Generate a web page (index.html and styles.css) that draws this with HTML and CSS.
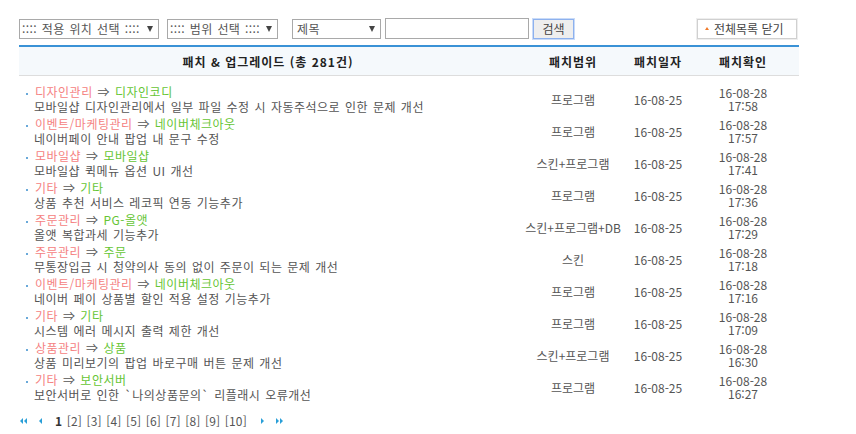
FILE: index.html
```html
<!DOCTYPE html>
<html lang="ko">
<head>
    <meta charset="UTF-8">
    <meta name="viewport" content="width=device-width, initial-scale=1.0">
    <title>패치 &amp; 업그레이드</title>
    <link rel="stylesheet" href="styles.css">
</head>
<body>
    <div class="container">
        <form class="toolbar" onsubmit="return false;">
            <label class="select-box sel-position">
                <select><option>:::: 적용 위치 선택 ::::</option></select>
            </label>
            <label class="select-box sel-range">
                <select><option>:::: 범위 선택 ::::</option></select>
            </label>
            <label class="select-box sel-field">
                <select><option>제목</option></select>
            </label>
            <input type="text" class="keyword">
            <button type="submit" class="btn-search">검색</button>
            <button type="button" class="btn-close"><span class="tri-up"></span>전체목록 닫기</button>
        </form>

        <table class="patch-list">
            <colgroup>
                <col class="col-title">
                <col class="col-range">
                <col class="col-date">
                <col class="col-check">
            </colgroup>
            <thead>
                <tr>
                    <th>패치 &amp; 업그레이드 (총 281건)</th>
                    <th>패치범위</th>
                    <th>패치일자</th>
                    <th>패치확인</th>
                </tr>
            </thead>
            <tbody id="patchRows">
                <!-- rows are filled in by the script below -->
            </tbody>
        </table>

        <div class="paging">
            <a href="#" class="pg-arrow"><svg width="8" height="6" viewBox="0 0 8 6"><polygon points="3,0 3,6 0,3"/><polygon points="7,0 7,6 4,3"/></svg></a>
            <a href="#" class="pg-arrow pg-prev"><svg width="4" height="6" viewBox="0 0 4 6"><polygon points="3,0 3,6 0,3"/></svg></a>
            <span class="pg-nums" id="pageNums"></span>
            <a href="#" class="pg-arrow pg-next"><svg width="4" height="6" viewBox="0 0 4 6"><polygon points="1,0 1,6 4,3"/></svg></a>
            <a href="#" class="pg-arrow"><svg width="8" height="6" viewBox="0 0 8 6"><polygon points="1,0 1,6 4,3"/><polygon points="5,0 5,6 8,3"/></svg></a>
        </div>
    </div>

    <script>
        // patch list data
        const patches = [
            ["디자인관리", "디자인코디", "모바일샵 디자인관리에서 일부 파일 수정 시 자동주석으로 인한 문제 개선", "프로그램", "16-08-25", "16-08-28", "17:58"],
            ["이벤트/마케팅관리", "네이버체크아웃", "네이버페이 안내 팝업 내 문구 수정", "프로그램", "16-08-25", "16-08-28", "17:57"],
            ["모바일샵", "모바일샵", "모바일샵 퀵메뉴 옵션 UI 개선", "스킨+프로그램", "16-08-25", "16-08-28", "17:41"],
            ["기타", "기타", "상품 추천 서비스 레코픽 연동 기능추가", "프로그램", "16-08-25", "16-08-28", "17:36"],
            ["주문관리", "PG-올앳", "올앳 복합과세 기능추가", "스킨+프로그램+DB", "16-08-25", "16-08-28", "17:29"],
            ["주문관리", "주문", "무통장입금 시 청약의사 동의 없이 주문이 되는 문제 개선", "스킨", "16-08-25", "16-08-28", "17:18"],
            ["이벤트/마케팅관리", "네이버체크아웃", "네이버 페이 상품별 할인 적용 설정 기능추가", "프로그램", "16-08-25", "16-08-28", "17:16"],
            ["기타", "기타", "시스템 에러 메시지 출력 제한 개선", "프로그램", "16-08-25", "16-08-28", "17:09"],
            ["상품관리", "상품", "상품 미리보기의 팝업 바로구매 버튼 문제 개선", "스킨+프로그램", "16-08-25", "16-08-28", "16:30"],
            ["기타", "보안서버", "보안서버로 인한 `나의상품문의` 리플래시 오류개선", "프로그램", "16-08-25", "16-08-28", "16:27"]
        ];

        const tbody = document.getElementById('patchRows');
        patches.forEach(function (p) {
            tbody.innerHTML += `
                <tr>
                    <td class="title">
                        <div class="cate"><span class="cate-main">${p[0]}</span> <span class="arrow">⇒</span> <span class="cate-sub">${p[1]}</span></div>
                        <div class="desc">${p[2]}</div>
                    </td>
                    <td>${p[3]}</td>
                    <td>${p[4]}</td>
                    <td class="check"><span>${p[5]}</span><span>${p[6]}</span></td>
                </tr>
            `;
        });

        // page numbers
        let nums = '<b>1</b>';
        for (let i = 2; i <= 10; i++) {
            nums += ` <a href="#">[${i}]</a>`;
        }
        document.getElementById('pageNums').innerHTML = nums;
    </script>
</body>
</html>
```

FILE: styles.css
```css
body {
    margin: 0;
    background-color: #fff;
    color: #555;
    font-family: "Noto Sans CJK KR", "Noto Sans", sans-serif;
    font-size: 12px;
}
.container {
    width: 780px;
    padding: 18px 0 0 19px;
}

/* search bar */
.toolbar {
    display: flex;
    align-items: center;
    height: 21px;
}
.select-box {
    position: relative;
    display: block;
    height: 20px;
    margin-right: 8px;
}
.select-box::after {
    content: "";
    position: absolute;
    right: 6px;
    top: 7px;
    border-left: 3px solid transparent;
    border-right: 3px solid transparent;
    border-top: 6px solid #444;
    pointer-events: none;
}
.select-box select {
    -webkit-appearance: none;
    appearance: none;
    height: 20px;
    width: 100%;
    margin: 0;
    padding: 0 14px 0 2px;
    border: 1px solid #a9a9a9;
    background-color: #fff;
    color: #555;
    font-family: inherit;
    font-size: 12px;
    line-height: 18px;
    letter-spacing: 0.4px;
    word-spacing: 1px;
}
.sel-position { width: 140px; }
.sel-range { width: 111px; margin-right: 14px; }
.sel-field { width: 89px; margin-right: 4px; }
.sel-field select { padding-left: 4px; }
.keyword {
    width: 144px;
    height: 21px;
    box-sizing: border-box;
    margin: 0 4px 0 0;
    border: 1px solid #a9a9a9;
}
.btn-search {
    width: 41px;
    height: 20px;
    padding: 0;
    border: 1px solid #8db1ee;
    box-shadow: 0 0 0 1px #c9dbf8;
    background-color: #eee;
    color: #444;
    font-family: inherit;
    font-size: 12px;
    line-height: 16px;
}
.btn-close {
    display: flex;
    align-items: center;
    width: 100px;
    height: 20px;
    margin-left: auto;
    margin-right: 2px;
    padding: 0 0 0 7px;
    border: 1px solid #d0d0d0;
    box-shadow: 0 0 0 1px #eee;
    background-color: #fff;
    color: #444;
    font-family: inherit;
    font-size: 12px;
    line-height: 16px;
}
.tri-up {
    display: inline-block;
    margin-right: 5px;
    border-left: 2.5px solid transparent;
    border-right: 2.5px solid transparent;
    border-bottom: 3px solid #f07a2a;
}

/* list */
.patch-list {
    width: 780px;
    margin-top: 6px;
    border-collapse: collapse;
    table-layout: fixed;
}
.col-title { width: 498px; }
.col-range { width: 112px; }
.col-date { width: 58px; }
.col-check { width: 112px; }
.patch-list th {
    height: 28px;
    padding: 0;
    border-top: 2px solid #3a92d6;
    border-bottom: 1px solid #ddd;
    background-color: #f5f9fc;
    color: #222;
    font-size: 12px;
    font-weight: bold;
    letter-spacing: 1px;
    text-align: center;
}
.patch-list td {
    padding: 1px 0;
    text-align: center;
    vertical-align: middle;
    line-height: 15px;
    white-space: nowrap;
}
.patch-list tbody tr:first-child td {
    padding-top: 8px;
}
.patch-list td.title {
    padding-left: 15px;
    text-align: left;
    letter-spacing: 0.5px;
    word-spacing: 1px;
}
.patch-list td.check span {
    display: block;
    height: 13px;
    line-height: 13px;
}
.cate::before {
    content: "";
    display: inline-block;
    width: 2px;
    height: 2px;
    margin: 0 7px 2px -8px;
    background-color: #6aa9d9;
}
.cate-main { color: #f58282; }
.cate-sub { color: #66c534; }
.arrow { color: #555; }

/* paging */
.paging {
    display: flex;
    align-items: center;
    margin-top: 10px;
    padding-left: 1px;
    line-height: 15px;
}
.paging a {
    color: #555;
    text-decoration: none;
}
.pg-arrow {
    display: flex;
    fill: #2a9fd8;
}
.pg-prev { margin-left: 11px; }
.pg-nums {
    margin: 0 13px 0 12px;
    letter-spacing: 0.2px;
    word-spacing: 0.8px;
}
.pg-nums b { color: #333; }
.pg-next + .pg-arrow { margin-left: 11px; }
```
